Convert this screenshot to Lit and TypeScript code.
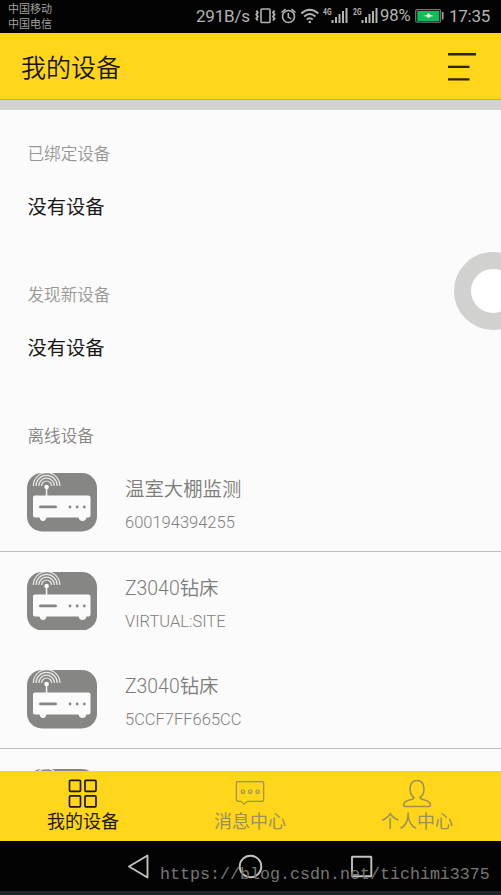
import { LitElement, html, css, svg, nothing } from "lit";
import { customElement, property } from "lit/decorators.js";

const FONT = css`Roboto, "Noto Sans CJK SC", sans-serif`;

interface Device {
  name?: string;
  id?: string;
  divided: boolean;
}

const DEVICES: Device[] = [
  { name: "温室大棚监测", id: "600194394255", divided: true },
  { name: "Z3040钻床", id: "VIRTUAL:SITE", divided: false },
  { name: "Z3040钻床", id: "5CCF7FF665CC", divided: true },
  { divided: false },
];

@customElement("status-bar")
class StatusBar extends LitElement {
  static styles = css`
    :host { display: flex; height: 33px; background: #030303; color: #b4b4b2; justify-content: space-between; font-family: ${FONT}; flex: none; }
    .carriers { padding: 2px 0 0 8px; font-size: 11px; line-height: 15px; color: #a2a2a0; }
    .right { display: flex; height: 33px; align-items: center; font-size: 17px; line-height: 33px; white-space: nowrap; }
    .speed { width: 59px; letter-spacing: -0.2px; }
    .pct { width: 34px; font-size: 16.6px; letter-spacing: -0.1px; margin-top: -2px; }
    .time { width: 52px; letter-spacing: -0.25px; }
    svg { display: block; flex: none; }
    .net { font: 700 9px Roboto, sans-serif; fill: #b4b4b2; }
  `;

  private signal(x: number, label: string) {
    return svg`
      <text class="net" x=${x} y="15" textLength="8.500" lengthAdjust="spacingAndGlyphs">${label}</text>
      <g fill="#b4b4b2">
        <rect x=${x + 8.5} y="20" width="2" height="3"/>
        <rect x=${x + 12} y="17" width="2" height="6"/>
        <rect x=${x + 15.5} y="14" width="2" height="9"/>
        <rect x=${x + 19} y="11" width="2" height="12"/>
        <rect x=${x + 22.5} y="8" width="2" height="15"/>
      </g>`;
  }

  render() {
    return html`
      <div class="carriers"><div>中国移动</div><div>中国电信</div></div>
      <div class="right">
        <span class="speed">291B/s</span>
        <svg width="125" height="33" viewBox="255 0 125 33" fill="none" stroke="#b4b4b2" stroke-width="1.6">
          <rect x="261" y="9" width="9" height="13.5" rx="0.8"/>
          <path d="M256.3 10.5l1.5 2-1.5 2 1.5 2-1.5 2 1.5 2M274.5 10.5l-1.5 2 1.5 2-1.5 2 1.5 2-1.500 2" stroke-width="1.9"/>
          <circle cx="288.500" cy="16.500" r="6"/>
          <path d="M288.300 13v4l3 2M281.500 12.500l4-3.500M295.500 12.500l-4-3.500" stroke-width="1.5"/>
          <path d="M301.300 13.500q8.500-7.500 17 0M304.200 16.500q5.600-4.800 11.200 0M306.800 19.500q3-2.500 6 0" stroke-width="1.9"/>
          <circle cx="309.800" cy="22" r="1.300" fill="#b4b4b2" stroke="none"/>
          <g stroke="none">${this.signal(323, "4G")}${this.signal(353, "2G")}</g>
        </svg>
        <span class="pct">98%</span>
        <svg width="35" height="33" viewBox="414 0 35 33">
          <rect x="415.700" y="9.700" width="25" height="12.500" rx="1.500" fill="none" stroke="#777a78" stroke-width="1.200"/>
          <rect x="417.300" y="11" width="22" height="10" fill="#11bd58"/>
          <rect x="442" y="12" width="1.500" height="7.500" fill="#a5a5a3"/>
          <path d="M423 16l4-1 1-2 2 1.700 3.500 1.300-3.500.7-1.800 1.600-1.200-1.700z" fill="#e4f6ea"/>
        </svg>
        <span class="time">17:35</span>
      </div>`;
  }
}

@customElement("device-row")
class DeviceRow extends LitElement {
  @property() name?: string;
  @property() code?: string;
  @property({ type: Boolean, reflect: true }) divided = false;

  static styles = css`
    :host { display: flex; box-sizing: border-box; height: 98.5px; padding: 20px 0 0 27px; gap: 28px; flex: none; font-family: ${FONT}; color: #888886; border-bottom: 1px solid transparent; }
    :host([divided]) { border-bottom-color: #bdbdbb; }
    svg { display: block; flex: none; }
    .name { font-size: 19.4px; line-height: 24px; margin-top: 5px; font-weight: 350; white-space: nowrap; color: #7c7c7a; }
    .code { font-size: 16.5px; line-height: 20px; margin-top: 11px; font-weight: 350; color: #80807e; }
  `;

  render() {
    return html`
      <svg width="70" height="58.500" viewBox="0 0 70 58.500">
        <rect width="70" height="58.500" rx="15" fill="#868684"/>
        <rect x="6" y="22.500" width="57.500" height="22" rx="2" fill="#fbfbfb"/>
        <path d="M12.500 44h7q-.5 4-3.500 4t-3.500-4zM51.500 44h8q-.5 4-4 4t-4-4z" fill="#fbfbfb"/>
        <rect x="18.800" y="14" width="1.500" height="9" fill="#fbfbfb"/>
        <circle cx="19.600" cy="14" r="2.300" fill="#fbfbfb"/>
        <path d="M14.600 13a5 5 0 0 1 10 0M11.800 13a7.800 7.800 0 0 1 15.600 0M9 13a10.600 10.600 0 0 1 21.200 0M6.300 13a13.300 13.300 0 0 1 26.600 0" fill="none" stroke="#e9e9e7" stroke-width="1.200"/>
        <rect x="12" y="32.500" width="18" height="2.800" rx="1.400" fill="#868684"/>
        <g fill="#868684"><circle cx="43" cy="34" r="1.400"/><circle cx="50.200" cy="34" r="1.400"/><circle cx="57.300" cy="34" r="1.400"/></g>
      </svg>
      ${this.name
        ? html`<div>
            <div class="name">${this.name}</div>
            <div class="code">${this.code}</div>
          </div>`
        : nothing}`;
  }
}

@customElement("tab-bar")
class TabBar extends LitElement {
  static styles = css`
    :host { display: grid; grid-template-columns: repeat(3, 1fr); height: 70px; background: #ffd61a; font-family: ${FONT}; flex: none; }
    .tab { display: flex; flex-direction: column; align-items: center; padding: 7px 1px 0 0; color: #99905a; font-size: 18px; line-height: 24px; }
    .active { color: #1c1a10; }
    svg { display: block; height: 32px; width: 34px; fill: none; stroke: currentColor; }
  `;

  render() {
    return html`
      <div class="tab active">
        <svg viewBox="0 0 34 32" stroke-width="1.700">
          <rect x="3.500" y="2.300" width="11" height="11" rx="1"/><rect x="19" y="2.300" width="11" height="11" rx="1"/>
          <rect x="3.500" y="17.800" width="11" height="11" rx="1"/><rect x="19" y="17.800" width="11" height="11" rx="1"/>
        </svg>
        <span>我的设备</span>
      </div>
      <div class="tab">
        <svg viewBox="0 0 34 32" stroke-width="1.200">
          <path d="M5 3.700h24q1.700 0 1.700 1.700v16.200q0 1.700-1.700 1.700H14.500l-3.500 3-3-3H5q-1.700 0-1.700-1.700V5.400Q3.300 3.700 5 3.700z"/>
          <circle cx="10" cy="13.700" r="1.700"/><circle cx="17.300" cy="13.700" r="1.700"/><circle cx="24.600" cy="13.700" r="1.700"/>
        </svg>
        <span>消息中心</span>
      </div>
      <div class="tab">
        <svg viewBox="0 0 34 32" stroke-width="1.500">
          <path d="M14 19.500C8.500 16 8.200 2.500 17 2.500S25.500 16 20 19.500q.3 1.300 2 1.700c5 1.300 8.300 2.300 8.500 5.800q0 1.500-1.500 1.500H5q-1.500 0-1.500-1.500c.2-3.500 3.500-4.500 8.500-5.800q1.700-.4 2-1.700z"/>
        </svg>
        <span>个人中心</span>
      </div>`;
  }
}

@customElement("app-root")
class AppRoot extends LitElement {
  static styles = css`
    :host { display: flex; flex-direction: column; position: relative; width: 501px; height: 895px; overflow: hidden; background: #fbfbfb; font-family: ${FONT}; }
    .header { flex: none; box-sizing: border-box; height: 66px; background: #ffd61a; display: flex; align-items: center; justify-content: space-between; padding: 0 24px 0 21px; }
    .title { font-size: 25px; line-height: 34px; color: #17160e; margin-top: 5px; font-weight: 350; }
    .menu { display: block; margin-top: 1px; }
    .strip { flex: none; box-sizing: border-box; height: 11px; border-top: 1px solid #a5a9ae; background: #d2d2d0; }
    .content { flex: 1; min-height: 0; overflow: hidden; display: flex; flex-direction: column; padding-top: 35px; }
    .label { flex: none; height: 20px; line-height: 20px; font-size: 16.6px; color: #979795; padding-left: 27.5px; margin-bottom: 33px; font-weight: 350; }
    .empty { flex: none; height: 20px; line-height: 20px; font-size: 19.3px; color: #181818; padding-left: 27.5px; margin-bottom: 68px; }
    .offline { margin-bottom: 6px; color: #858583; }
    .nav { flex: none; box-sizing: border-box; height: 54px; background: #030303; border-bottom: 4px solid #1f232b; }
    .nav svg { display: block; }
    .assist { position: absolute; left: 453.5px; top: 252px; width: 78px; height: 78px; box-sizing: border-box; border: 17px solid #d1d1cf; border-radius: 50%; background: #fff; }
    .mark { position: absolute; left: 160px; top: 863px; font-family: "Liberation Mono", monospace; font-size: 16.66px; line-height: 24px; color: #777773; white-space: nowrap; }
  `;

  render() {
    return html`
      <status-bar></status-bar>
      <div class="header">
        <div class="title">我的设备</div>
        <svg class="menu" width="29" height="28" viewBox="0 0 29 28" stroke="#29240c" stroke-width="2.400">
          <path d="M0 1.300h28M0 13.900h21.500M0 26.400h21.500"/>
        </svg>
      </div>
      <div class="strip"></div>
      <div class="content">
        <div class="label">已绑定设备</div>
        <div class="empty">没有设备</div>
        <div class="label">发现新设备</div>
        <div class="empty">没有设备</div>
        <div class="label offline">离线设备</div>
        ${DEVICES.map((d) => html`<device-row .name=${d.name} .code=${d.id} ?divided=${d.divided}></device-row>`)}
      </div>
      <tab-bar></tab-bar>
      <div class="nav">
        <svg width="501" height="50" viewBox="0 841 501 50" fill="none" stroke="#c2c2c0" stroke-width="1.900" stroke-linejoin="round">
          <path d="M129 866.500L147.500 855.500V877.500z"/>
          <circle cx="250.500" cy="866.500" r="10.800"/>
          <rect x="352" y="856.800" width="19.300" height="19.500" rx="0.500"/>
        </svg>
      </div>
      <div class="assist"></div>
      <div class="mark">https://blog.csdn.net/tichimi3375</div>`;
  }
}
